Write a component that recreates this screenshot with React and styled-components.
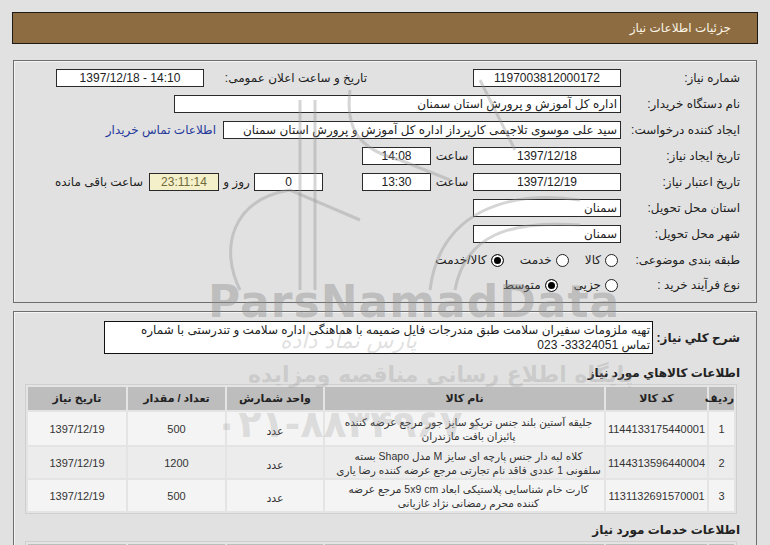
import React from "react";
import styled, { createGlobalStyle } from "styled-components";

const GlobalStyle = createGlobalStyle`
  html, body {
    margin: 0;
    padding: 0;
    background: #e1e1e1;
  }
  body {
    font-family: "Liberation Sans", "DejaVu Sans", Tahoma, sans-serif;
    font-size: 12px;
    color: #222;
  }
`;

const items = [
  {
    id: 1,
    code: "1144133175440001",
    name: ["جلیقه آستین بلند جنس تریکو سایز جور مرجع عرضه کننده", "پائیزان بافت مازندران"],
    unit: "عدد",
    qty: "500",
    date: "1397/12/19",
  },
  {
    id: 2,
    code: "1144313596440004",
    name: ["کلاه لبه دار جنس پارچه ای سایز M مدل Shapo بسته", "سلفونی 1 عددی فاقد نام تجارتی مرجع عرضه کننده رضا یاری"],
    unit: "عدد",
    qty: "1200",
    date: "1397/12/19",
  },
  {
    id: 3,
    code: "1131132691570001",
    name: ["کارت خام شناسایی پلاستیکی ابعاد 5x9 cm مرجع عرضه", "کننده محرم رمضانی نژاد غازیانی"],
    unit: "عدد",
    qty: "500",
    date: "1397/12/19",
  },
];

const App = () => {
  return (
    <Page dir="rtl">
      <GlobalStyle />
      <TitleBar>جزئیات اطلاعات نیاز</TitleBar>

      <Panel>
        <Row>
          <Label>شماره نیاز:</Label>
          <Field $w={148} $center>1197003812000172</Field>
          <Label $w={148} style={{ marginRight: 106 }}>تاریخ و ساعت اعلان عمومی:</Label>
          <Field $w={148} $center dir="ltr" style={{ marginRight: 15 }}>1397/12/18 - 14:10</Field>
        </Row>
        <Row>
          <Label>نام دستگاه خریدار:</Label>
          <Field $w={447}>اداره کل آموزش و پرورش استان سمنان</Field>
        </Row>
        <Row>
          <Label>ایجاد کننده درخواست:</Label>
          <Field $w={398}>سید علی موسوی تلاجیمی کارپرداز اداره کل آموزش و پرورش استان سمنان</Field>
          <Link>اطلاعات تماس خریدار</Link>
        </Row>
        <Row>
          <Label>تاریخ ایجاد نیاز:</Label>
          <Field $w={148} $center>1397/12/18</Field>
          <Unit $w={42}>ساعت</Unit>
          <Field $w={69} $center>14:08</Field>
        </Row>
        <Row>
          <Label>تاریخ اعتبار نیاز:</Label>
          <Field $w={148} $center>1397/12/19</Field>
          <Unit $w={42}>ساعت</Unit>
          <Field $w={69} $center>13:30</Field>
          <Field $w={69} $center style={{ marginRight: 39 }}>0</Field>
          <Unit $w={35}>روز و</Unit>
          <Field $w={70} $center $remain>23:11:14</Field>
          <Unit style={{ marginRight: 6 }}>ساعت باقی مانده</Unit>
        </Row>
        <Row>
          <Label>استان محل تحویل:</Label>
          <Field $w={148}>سمنان</Field>
        </Row>
        <Row>
          <Label>شهر محل تحویل:</Label>
          <Field $w={148}>سمنان</Field>
        </Row>
        <Row>
          <Label>طبقه بندی موضوعی:</Label>
          <Options>
            <Option><Radio />کالا</Option>
            <Option><Radio />خدمت</Option>
            <Option><Radio $checked />کالا/خدمت</Option>
          </Options>
        </Row>
        <Row $h={24}>
          <Label>نوع فرآیند خرید :</Label>
          <Options>
            <Option><Radio />جزیی</Option>
            <Option><Radio $checked />متوسط</Option>
          </Options>
        </Row>
      </Panel>

      <Panel $open>
        <DescRow>
          <BoldLabel>شرح کلي نیاز:</BoldLabel>
          <DescBox>
            تهیه ملزومات سفیران سلامت طبق مندرجات فایل ضمیمه با هماهنگی اداره سلامت و تندرستی با شماره
            <br />
            تماس 33324051- 023
          </DescBox>
        </DescRow>

        <SectionTitle>اطلاعات کالاهاي مورد نیاز</SectionTitle>
        <Table>
          <thead>
            <tr>
              <Th $w={25}>ردیف</Th>
              <Th $w={101}>کد کالا</Th>
              <Th $w={279}>نام کالا</Th>
              <Th $w={96}>واحد شمارش</Th>
              <Th $w={97}>تعداد / مقدار</Th>
              <Th $w={98}>تاریخ نیاز</Th>
            </tr>
          </thead>
          <tbody>
            {items.map((it, i) => (
              <Tr key={it.id} $alt={i % 2 === 1} $h={i === 0 ? 33 : 31}>
                <Td>{it.id}</Td>
                <Td>{it.code}</Td>
                <NameTd>
                  {it.name[0]}
                  <br />
                  {it.name[1]}
                </NameTd>
                <Td $low>{it.unit}</Td>
                <Td>{it.qty}</Td>
                <Td>{it.date}</Td>
              </Tr>
            ))}
          </tbody>
        </Table>

        <SectionTitle $top={9}>اطلاعات خدمات مورد نیاز</SectionTitle>
        <Table>
          <thead>
            <tr>
              <Th $w={25}>ردیف</Th>
              <Th $w={101}>کد خدمت</Th>
              <Th $w={279}>نام خدمت</Th>
              <Th $w={96}>واحد اندازه گیری</Th>
              <Th $w={97}>تعداد / مقدار</Th>
              <Th $w={98}>تاریخ نیاز</Th>
            </tr>
          </thead>
        </Table>
      </Panel>

      <Watermark>
        <svg width="420" height="260" viewBox="0 0 420 260">
          <g fill="none" stroke="rgba(150,150,150,0.4)" strokeWidth="3">
            <path d="M60 240 C 40 200, 50 150, 110 140 L 180 170" />
            <path d="M120 50 L 120 240" />
            <path d="M135 50 L 135 240" />
            <path d="M170 40 C 165 80, 180 100, 220 110 L 270 130" />
            <path d="M250 240 C 260 160, 330 140, 400 150" />
            <path d="M275 240 C 285 185, 330 170, 400 175" />
            <path d="M300 30 L 335 100" />
          </g>
        </svg>
        <MarkText>ParsNamadData</MarkText>
        <MarkSub>پارس نماد داده</MarkSub>
        <MarkLine>پایگاه اطلاع رسانی مناقصه ومزایده</MarkLine>
        <MarkPhone>۰۲۱-۸۸۳۴۹۶۷۰</MarkPhone>
      </Watermark>
    </Page>
  );
};

const Page = styled.div`
  position: relative;
  width: 770px;
  height: 545px;
  overflow: hidden;
  padding-top: 12px;
  box-sizing: border-box;
`;

const TitleBar = styled.div`
  margin: 0 12px;
  height: 30px;
  line-height: 30px;
  background: #8c6c40;
  border: 1px solid #1e1a14;
  color: #fbf4e6;
  font-size: 12px;
  padding-right: 26px;
`;

const Panel = styled.div`
  margin: ${(p) => (p.$open ? "8px 13px 0" : "16px 13px 0")};
  border: 1px solid #6e6e6e;
  box-shadow: inset 1px 1px 0 #f4f4f4;
  padding: ${(p) => (p.$open ? "9px 16px 20px 20px" : "4px 16px 5px 10px")};
`;

const Row = styled.div`
  display: flex;
  align-items: center;
  height: ${(p) => p.$h || 26}px;
`;

const Label = styled.div`
  flex: none;
  width: ${(p) => p.$w || 119}px;
  white-space: nowrap;
  color: #222;
`;

const Field = styled.div`
  flex: none;
  box-sizing: border-box;
  width: ${(p) => p.$w}px;
  height: 18px;
  line-height: 16px;
  border: 1px solid #2a2a2a;
  background: ${(p) => (p.$remain ? "#f4f0c9" : "#fff")};
  color: ${(p) => (p.$remain ? "#6f6a3a" : "#222")};
  text-align: ${(p) => (p.$center ? "center" : "right")};
  padding: 0 3px;
  white-space: nowrap;
  overflow: hidden;
`;

const Unit = styled.div`
  flex: none;
  width: ${(p) => (p.$w ? `${p.$w}px` : "auto")};
  text-align: center;
  white-space: nowrap;
  color: #222;
`;

const Link = styled.a`
  margin-right: 7px;
  color: #24399a;
  white-space: nowrap;
  text-decoration: none;
`;

const Options = styled.div`
  display: flex;
  align-items: center;
  gap: 16px;
  padding-right: 3px;
`;

const Option = styled.label`
  display: flex;
  align-items: center;
  gap: 4px;
  white-space: nowrap;
`;

const Radio = styled.span`
  box-sizing: border-box;
  width: 13px;
  height: 13px;
  border-radius: 50%;
  border: 1px solid #222;
  background: ${(p) => (p.$checked ? "#000" : "#fff")};
  box-shadow: ${(p) => (p.$checked ? "inset 0 0 0 2px #fff" : "none")};
`;

const DescRow = styled.div`
  display: flex;
  align-items: center;
  gap: 4px;
`;

const BoldLabel = styled.div`
  flex: none;
  width: 83px;
  font-weight: bold;
  font-size: 12px;
  color: #222;
  white-space: nowrap;
`;

const DescBox = styled.div`
  box-sizing: border-box;
  width: 549px;
  height: 33px;
  border: 1px solid #111;
  background: #fff;
  padding: 1px 2px 0;
  line-height: 15px;
  color: #222;
  white-space: nowrap;
`;

const SectionTitle = styled.div`
  font-weight: bold;
  font-size: 12px;
  color: #222;
  margin-top: ${(p) => p.$top || 12}px;
  margin-bottom: 4px;
`;

const Table = styled.table`
  border-collapse: separate;
  border-spacing: 2px;
  background: #e4e4e4;
  border: 1px solid #cfcfcf;
  margin-right: 3px;
  width: 710px;
  table-layout: fixed;
  font-size: 11px;
`;

const Th = styled.th`
  width: ${(p) => p.$w}px;
  height: 23px;
  padding: 0;
  background: #bdbdbd;
  color: #222;
  font-weight: bold;
  font-size: 11px;
  text-align: center;
  white-space: nowrap;
`;

const Tr = styled.tr`
  height: ${(p) => p.$h}px;
  td {
    background: ${(p) => (p.$alt ? "#ececec" : "#f4f4f4")};
  }
`;

const Td = styled.td`
  padding: ${(p) => (p.$low ? "6px 0 0" : "0")};
  text-align: center;
  color: #333;
  white-space: nowrap;
`;

const NameTd = styled.td`
  padding: 0 0 0 8px;
  text-align: center;
  color: #333;
  font-size: 10.5px;
  line-height: 14px;
  white-space: nowrap;
`;

const Watermark = styled.div`
  position: absolute;
  left: 170px;
  top: 50px;
  width: 440px;
  height: 420px;
  pointer-events: none;
  svg {
    position: absolute;
    left: 10px;
    top: 0;
  }
`;

const MarkText = styled.div`
  position: absolute;
  left: 38px;
  top: 226px;
  font-family: "DejaVu Sans", sans-serif;
  font-weight: bold;
  font-size: 44px;
  letter-spacing: 1px;
  color: rgba(140, 140, 140, 0.42);
  direction: ltr;
`;

const MarkSub = styled.div`
  position: absolute;
  left: 110px;
  top: 278px;
  font-family: "DejaVu Sans", sans-serif;
  font-size: 22px;
  font-style: italic;
  color: rgba(150, 150, 150, 0.3);
`;

const MarkLine = styled.div`
  position: absolute;
  left: 78px;
  top: 312px;
  font-family: "DejaVu Sans", sans-serif;
  font-size: 22px;
  font-weight: bold;
  color: rgba(150, 150, 150, 0.3);
  white-space: nowrap;
`;

const MarkPhone = styled.div`
  position: absolute;
  left: 45px;
  top: 352px;
  font-family: "DejaVu Sans", sans-serif;
  font-size: 38px;
  font-weight: bold;
  color: rgba(150, 150, 150, 0.26);
  direction: ltr;
  white-space: nowrap;
`;

export default App;
